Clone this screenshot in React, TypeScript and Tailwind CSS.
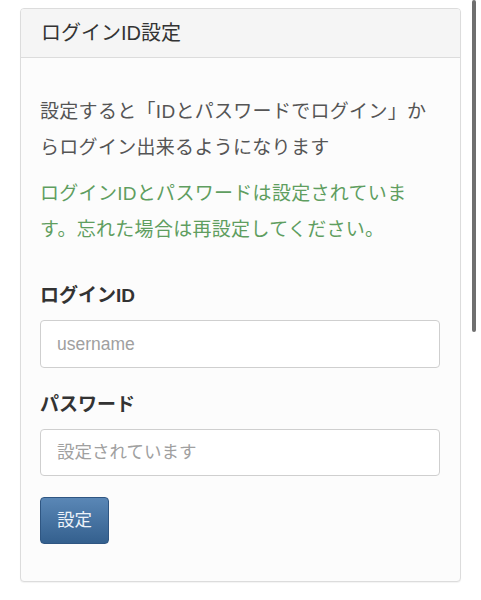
export default function App() {
  return (
    <div className="relative h-[600px] w-[481px] overflow-hidden bg-white pt-[8px] pl-[20px] font-['Liberation_Sans','Noto_Sans_CJK_JP',sans-serif]">
      {/* scrollbar indicator */}
      <div className="absolute right-[5px] top-0 h-[332px] w-[4px] rounded-full bg-[#6f6f6f]" />

      <div className="w-[441px] overflow-hidden rounded-[4px] border border-[#dcdcdc] bg-[#fcfcfc] shadow-[0_1px_1px_rgba(0,0,0,0.05)]">
        {/* Header */}
        <div className="flex h-[49px] items-center border-b border-[#dcdcdc] bg-[#f5f5f5] px-[20px] text-[20px] text-[#333]">
          ログインID設定
        </div>

        {/* Body */}
        <div className="px-[19px] pt-[36px] pb-[37px]">
          <p className="mb-[10px] text-[19px] leading-[36px] tracking-[0.3px] text-[#555]">
            設定すると「IDとパスワードでログイン」からログイン出来るようになります
          </p>
          <p className="text-[19px] leading-[36px] tracking-[0.3px] text-[#5f9e60]">
            ログインIDとパスワードは設定されています。忘れた場合は再設定してください。
          </p>

          <label className="mt-[35px] mb-[11px] block text-[19px] font-bold leading-[26px] text-[#333]">
            ログインID
          </label>
          <input
            type="text"
            placeholder="username"
            className="block h-[48px] w-[400px] rounded-[4px] border border-[#cfcfcf] bg-white px-[16px] text-[17.5px] text-[#555] placeholder:text-[#a0a0a0] outline-none"
          />

          <label className="mt-[24px] mb-[11px] block text-[19px] font-bold leading-[26px] text-[#333]">
            パスワード
          </label>
          <input
            type="password"
            placeholder="設定されています"
            className="block h-[47px] w-[400px] rounded-[4px] border border-[#cfcfcf] bg-white px-[16px] text-[17.5px] text-[#555] placeholder:text-[#a0a0a0] outline-none"
          />

          <button className="mt-[21px] flex h-[47px] w-[69px] items-center justify-center rounded-[4px] border border-[#2f5682] bg-gradient-to-b from-[#5a87b6] to-[#34608e] text-[17.5px] text-[#eef3f9]">
            設定
          </button>
        </div>
      </div>
    </div>
  );
}
